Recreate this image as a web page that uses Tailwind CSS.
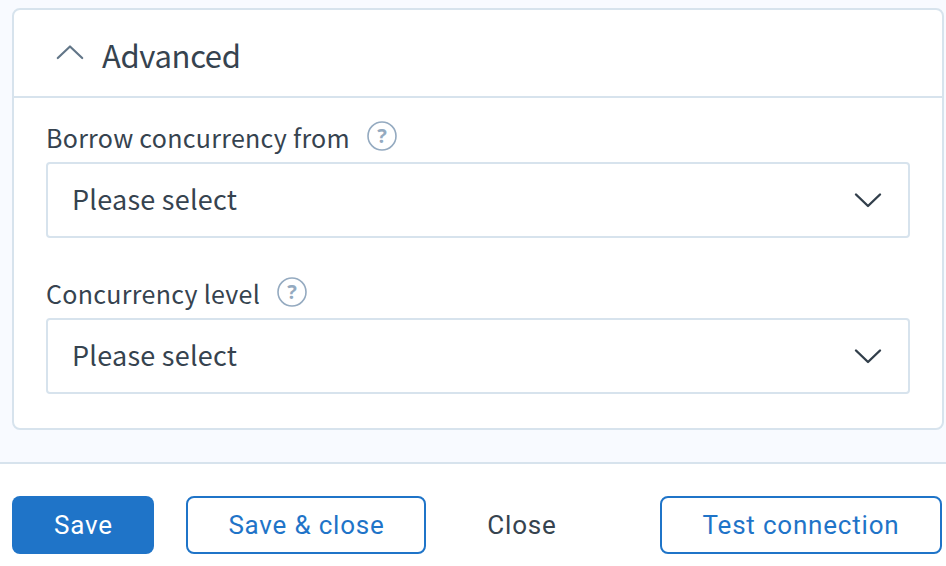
<!DOCTYPE html>
<html lang="en">
<head>
  <meta charset="UTF-8" />
  <meta name="viewport" content="width=device-width, initial-scale=1" />
  <title>Advanced settings</title>
  <script src="https://cdn.jsdelivr.net/npm/@tailwindcss/browser@4"></script>
</head>
<body class="bg-[#f8faff] text-[#36434f] font-['Noto_Sans_CJK_SC',sans-serif] h-screen overflow-hidden flex flex-col">
  <main class="h-[462px] shrink-0 pt-2 pl-3 pr-0.5">
    <section class="h-[422px] bg-white border-2 border-[#d7e3ed] rounded-lg">
      <!-- Section header -->
      <header class="h-[88px] border-b-2 border-[#d7e3ed] flex items-start pl-[42px]">
        <svg class="w-7 h-4 mt-[34px]" viewBox="0 0 28 16" fill="none" stroke="#627688" stroke-width="2.2" stroke-linecap="round" stroke-linejoin="round">
          <path d="M1.8 14 L14 2.5 L26.2 14" />
        </svg>
        <h2 class="ml-[18px] mt-[21px] text-[31px] leading-[48px] tracking-[-0.35px]">Advanced</h2>
      </header>

      <div class="px-8 pt-5">
        <!-- Borrow concurrency -->
        <div class="h-11 flex items-start">
          <label for="borrow" class="text-[25px] leading-[39px] tracking-[0.28px]">Borrow concurrency from</label>
          <svg class="ml-[17px] mt-[3px] w-[30px] h-[30px] font-['Noto_Sans',sans-serif]" viewBox="0 0 30 30">
            <circle cx="15" cy="15" r="14" fill="none" stroke="#94aac0" stroke-width="1.6" />
            <text x="15" y="22" text-anchor="middle" font-size="20" font-weight="700" fill="#94aac0">?</text>
          </svg>
        </div>
        <button id="borrow" type="button" class="w-full h-[76px] border-2 border-[#d7e3ed] rounded pl-6 pr-[26px] flex items-center justify-between text-[27px] tracking-[0.24px]">
          <span class="pb-0.5">Please select</span>
          <svg class="w-7 h-4" viewBox="0 0 28 16" fill="none" stroke="#323f4b" stroke-width="2.4" stroke-linecap="round" stroke-linejoin="round">
            <path d="M2 2.5 L14 14 L26 2.5" />
          </svg>
        </button>

        <!-- Concurrency level -->
        <div class="h-11 mt-9 flex items-start">
          <label for="level" class="text-[25px] leading-[39px] tracking-[0.3px]">Concurrency level</label>
          <svg class="ml-[17px] mt-[3px] w-[30px] h-[30px] font-['Noto_Sans',sans-serif]" viewBox="0 0 30 30">
            <circle cx="15" cy="15" r="14" fill="none" stroke="#94aac0" stroke-width="1.6" />
            <text x="15" y="22" text-anchor="middle" font-size="20" font-weight="700" fill="#94aac0">?</text>
          </svg>
        </div>
        <button id="level" type="button" class="w-full h-[76px] border-2 border-[#d7e3ed] rounded pl-6 pr-[26px] flex items-center justify-between text-[27px] tracking-[0.24px]">
          <span class="pb-0.5">Please select</span>
          <svg class="w-7 h-4" viewBox="0 0 28 16" fill="none" stroke="#323f4b" stroke-width="2.4" stroke-linecap="round" stroke-linejoin="round">
            <path d="M2 2.5 L14 14 L26 2.5" />
          </svg>
        </button>
      </div>
    </section>
  </main>

  <!-- Actions -->
  <footer class="grow bg-white border-t-2 border-[#d7e3ed] pt-8 pl-3 pr-1 flex items-start font-[Roboto,sans-serif] text-[26px] tracking-[0.8px]">
    <button type="button" class="w-[142px] h-[58px] rounded-lg bg-[#1f74c8] text-white pl-px">Save</button>
    <button type="button" class="ml-8 w-[240px] h-[58px] rounded-lg border-2 border-[#1f74c8] text-[#1f74c8] pl-px">Save &amp; close</button>
    <button type="button" class="ml-[30px] w-[132px] h-[58px]">Close</button>
    <button type="button" class="ml-auto w-[282px] h-[58px] rounded-lg border-2 border-[#1f74c8] text-[#1f74c8]">Test connection</button>
  </footer>
</body>
</html>
